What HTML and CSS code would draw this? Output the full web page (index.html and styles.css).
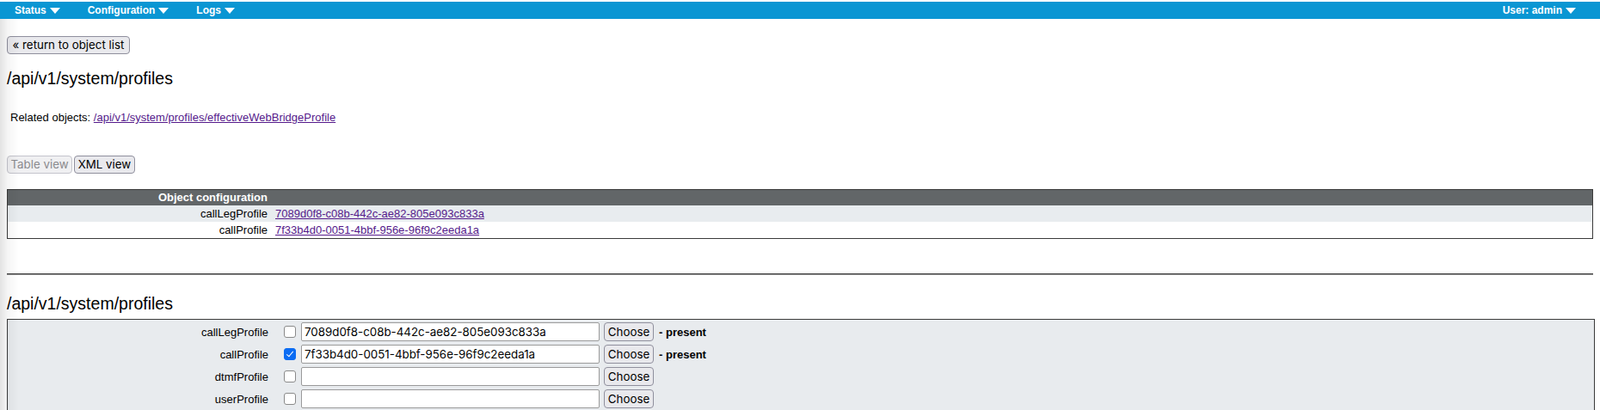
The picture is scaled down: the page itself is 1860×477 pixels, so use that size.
FILE: index.html
```html
<!DOCTYPE html>
<html lang="en">
<head>
<meta charset="utf-8">
<title>/api/v1/system/profiles</title>
<link rel="stylesheet" href="styles.css">
</head>
<body>
<div class="topnav">
  <ul class="menu">
    <li class="menu-item">Status<svg class="caret" width="12" height="7" viewBox="0 0 12 7"><polygon points="0,0 12,0 6,7" fill="#fff"/></svg></li>
    <li class="menu-item">Configuration<svg class="caret" width="12" height="7" viewBox="0 0 12 7"><polygon points="0,0 12,0 6,7" fill="#fff"/></svg></li>
    <li class="menu-item">Logs<svg class="caret" width="12" height="7" viewBox="0 0 12 7"><polygon points="0,0 12,0 6,7" fill="#fff"/></svg></li>
  </ul>
  <div class="user">User: admin<svg class="caret" width="12" height="7" viewBox="0 0 12 7"><polygon points="0,0 12,0 6,7" fill="#fff"/></svg></div>
</div>
<div class="shade"></div>
<main class="page">
  <button class="btn btn-back" type="button">« return to object list</button>
  <h2 class="title title-first">/api/v1/system/profiles</h2>
  <p class="related">Related objects: <a href="#">/api/v1/system/profiles/effectiveWebBridgeProfile</a></p>
  <div class="views"><button class="btn" type="button" disabled>Table view</button><button class="btn" type="button">XML view</button></div>
  <table class="objconf">
    <thead>
      <tr><th class="c1">Object configuration</th><th class="c2"></th></tr>
    </thead>
    <tbody>
      <tr class="alt"><td class="c1">callLegProfile</td><td class="c2"><a href="#">7089d0f8-c08b-442c-ae82-805e093c833a</a></td></tr>
      <tr><td class="c1">callProfile</td><td class="c2"><a href="#">7f33b4d0-0051-4bbf-956e-96f9c2eeda1a</a></td></tr>
    </tbody>
  </table>
  <hr class="sep">
  <h2 class="title title-second">/api/v1/system/profiles</h2>
  <div class="formbox">
    <div class="frow">
      <label class="flabel">callLegProfile</label>
      <input type="checkbox" class="fcheck">
      <input type="text" class="ftext" value="7089d0f8-c08b-442c-ae82-805e093c833a">
      <button class="btn btn-choose" type="button">Choose</button>
      <span class="present">- present</span>
    </div>
    <div class="frow">
      <label class="flabel">callProfile</label>
      <input type="checkbox" class="fcheck" checked>
      <input type="text" class="ftext" value="7f33b4d0-0051-4bbf-956e-96f9c2eeda1a">
      <button class="btn btn-choose" type="button">Choose</button>
      <span class="present">- present</span>
    </div>
    <div class="frow">
      <label class="flabel">dtmfProfile</label>
      <input type="checkbox" class="fcheck">
      <input type="text" class="ftext" value="">
      <button class="btn btn-choose" type="button">Choose</button>
    </div>
    <div class="frow">
      <label class="flabel">userProfile</label>
      <input type="checkbox" class="fcheck">
      <input type="text" class="ftext" value="">
      <button class="btn btn-choose" type="button">Choose</button>
    </div>
  </div>
</main>
</body>
</html>
```
FILE: styles.css
```css
html, body {
  margin: 0;
  padding: 0;
  background: #fff;
}
body {
  font-family: "Liberation Sans", Arial, Helvetica, sans-serif;
  font-size: 13px;
  color: #000;
}

/* top navigation */
.topnav {
  margin-top: 2px;
  height: 20px;
  background: #0a96d3;
  color: #fff;
  font-weight: bold;
  font-size: 12px;
  line-height: 20px;
  display: flex;
  justify-content: space-between;
}
.menu {
  list-style: none;
  margin: 0;
  padding: 0 0 0 1px;
  display: flex;
}
.menu-item {
  padding: 0 16px;
  display: flex;
  align-items: center;
}
.caret {
  margin-left: 4px;
  display: block;
}
.user {
  padding-right: 28px;
  display: flex;
  align-items: center;
}

.shade {
  position: fixed;
  left: 0;
  top: 22px;
  bottom: 0;
  width: 22px;
  background: linear-gradient(to right, rgba(0,0,0,0.11), rgba(0,0,0,0.04) 40%, rgba(0,0,0,0));
  pointer-events: none;
}

.page {
  padding: 0 8px 20px 8px;
}

/* buttons */
.btn {
  font-family: Inter, "Liberation Sans", sans-serif;
  font-size: 13.33px;
  color: #000;
  background: #e9e9ed;
  border: 1px solid #8f8f9d;
  border-radius: 4px;
  height: 21px;
  padding: 0 6px;
  margin: 0;
  line-height: 19px;
  -webkit-appearance: none;
  appearance: none;
}
.btn:disabled {
  color: #8a8a8e;
  background: #f0f0f2;
  border-color: #c4c4cc;
}
.btn-back {
  display: block;
  margin-top: 20px;
  width: 143px;
  padding: 0;
}

.title {
  font-weight: normal;
  font-size: 19.5px;
  line-height: 23px;
  margin: 0;
}
.title-first {
  margin-top: 17px;
}
.title-second {
  margin-top: 22px;
}

.related {
  margin: 26px 0 0 0;
  padding-left: 4px;
  line-height: 15px;
}
a {
  color: #551a8b;
  text-decoration: underline;
}

.views {
  margin-top: 37px;
  display: flex;
}
.views .btn:first-child {
  width: 76px;
  padding: 0;
}
.views .btn + .btn {
  margin-left: 2px;
  width: 71px;
  padding: 0;
}

/* object configuration table */
.objconf {
  margin-top: 18px;
  width: 100%;
  border: 1px solid #3a3a3a;
  border-collapse: separate;
  border-spacing: 0;
}
.objconf th {
  background: #626668;
  color: #fff;
  font-weight: bold;
  height: 18px;
  line-height: 18px;
  padding: 0 3px;
  text-align: right;
}
.objconf td {
  height: 18px;
  line-height: 18px;
  padding: 1px 0 0 0;
  box-sizing: border-box;
}
.objconf .c1 {
  width: 299px;
  padding-left: 3px;
  padding-right: 3px;
  text-align: right;
}
.objconf td.c2 {
  padding-left: 6px;
  text-align: left;
}
.objconf tr.alt td {
  background: #e8ecef;
}

.sep {
  margin: 40px 0 0 0;
  border: 0;
  border-top: 1px solid #4a4a4a;
  border-bottom: 1px solid #8a8a8a;
  height: 0;
}

/* form box */
.formbox {
  margin-top: 6px;
  margin-right: -2px;
  border: 1px solid #3a3a3a;
  background: #e8ebee;
  padding: 3px 0 20px 0;
}
.frow {
  display: flex;
  align-items: center;
  height: 22px;
  margin-bottom: 4px;
}
.flabel {
  width: 303px;
  text-align: right;
}
.fcheck {
  -webkit-appearance: none;
  appearance: none;
  width: 14px;
  height: 14px;
  margin: 0 0 0 18px;
  border: 1px solid #8a8a8a;
  border-radius: 3px;
  background: #fff;
  position: relative;
  flex: none;
}
.fcheck:checked {
  background: #0b6cf3;
  border-color: #0b6cf3;
}
.fcheck:checked::after {
  content: "";
  position: absolute;
  left: 4px;
  top: 1px;
  width: 3px;
  height: 7px;
  border: solid #fff;
  border-width: 0 1.6px 1.6px 0;
  transform: rotate(40deg);
}
.ftext {
  font-family: Inter, "Liberation Sans", sans-serif;
  font-size: 13.33px;
  color: #000;
  margin: 0 0 0 6px;
  width: 347px;
  height: 22px;
  box-sizing: border-box;
  border: 1px solid #9a9a9a;
  border-radius: 2px;
  padding: 0 3px;
  background: #fff;
}
.btn-choose {
  margin-left: 5px;
  width: 58px;
  height: 22px;
  padding: 0;
}
.present {
  margin-left: 6px;
  font-weight: bold;
}
```
